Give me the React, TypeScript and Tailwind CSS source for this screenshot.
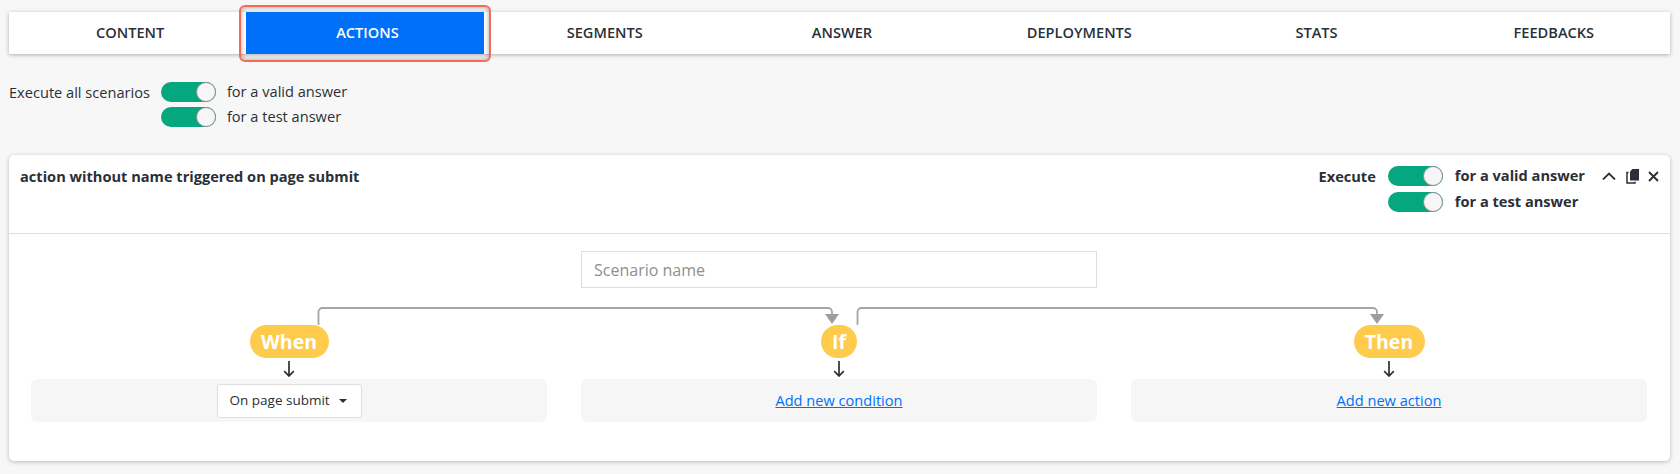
import type { ReactNode } from 'react';

const tabs = ['CONTENT', 'ACTIONS', 'SEGMENTS', 'ANSWER', 'DEPLOYMENTS', 'STATS', 'FEEDBACKS'];

function Toggle() {
  return (
    <div className="relative h-[20px] w-[55px] rounded-full bg-[#05a77f]">
      <div className="absolute right-0 top-0 h-[20px] w-[20px] rounded-full border border-[#8a8f94] bg-[#f6f6f6]" />
    </div>
  );
}

function ToggleRows({ bold }: { bold?: boolean }) {
  return (
    <div className={bold ? 'flex flex-col gap-[6px]' : 'flex flex-col gap-[5px]'}>
      {['for a valid answer', 'for a test answer'].map((label) => (
        <div key={label} className={bold ? 'flex h-[20px] items-center gap-[12px]' : 'flex h-[20px] items-center gap-[11px]'}>
          <Toggle />
          <span className={bold ? 'font-bold' : ''}>{label}</span>
        </div>
      ))}
    </div>
  );
}

function Step({ label, width, children }: { label: string; width: string; children: ReactNode }) {
  return (
    <div className="flex w-[516px] flex-col items-center">
      <div className={`flex h-[33px] items-center justify-center rounded-full bg-[#ffcb4d] text-[19.5px] font-bold text-white ${width}`}>
        {label}
      </div>
      <svg className="mt-[3px] h-[16px] w-[12px]" viewBox="0 0 12 16" fill="none" stroke="#2b2f38" strokeWidth="1.7">
        <path d="M6 0 V15 M1.2 10.2 L6 15 L10.8 10.2" />
      </svg>
      <div className="mt-[2px] flex h-[43px] w-full items-center justify-center rounded-[6px] bg-[#f6f6f6]">
        {children}
      </div>
    </div>
  );
}

export default function App() {
  return (
    <div className="min-h-[474px] bg-[#f7f7f7] pl-[9px] pr-[10px] pt-[12px] font-['Open_Sans',sans-serif] text-[14.6px] text-[#2b2f38]">
      {/* tabs */}
      <nav className="flex h-[42px] bg-white shadow-[0_1px_4px_rgba(0,0,0,0.3)]">
        {tabs.map((tab) => (
          <div
            key={tab}
            className={
              tab === 'ACTIONS'
                ? 'relative flex flex-1 items-center justify-center bg-[#0070f9] pl-[5px] font-semibold text-white'
                : 'flex flex-1 items-center justify-center pl-[5px] font-semibold'
            }
          >
            {tab}
            {tab === 'ACTIONS' && (
              <div className="absolute -bottom-[8px] -left-[7px] -right-[7px] -top-[7px] rounded-[6px] border-[2px] border-[#f66a58] shadow-[inset_0_0_5px_rgba(0,0,0,0.35)]" />
            )}
          </div>
        ))}
      </nav>

      <div className="mt-[28px] flex">
        <span className="mr-[11px] leading-[20px]">Execute all scenarios</span>
        <ToggleRows />
      </div>

      {/* scenario card */}
      <div className="mt-[28px] h-[306px] rounded-[5px] bg-white shadow-[0_1px_4px_rgba(0,0,0,0.25)]">
        <div className="flex h-[79px] justify-between border-b border-[#dedede] pl-[11px] pr-[11px] pt-[11px]">
          <span className="font-bold leading-[20px]">action without name triggered on page submit</span>
          <div className="flex">
            <span className="mr-[12px] font-bold leading-[20px]">Execute</span>
            <ToggleRows bold />
            <div className="ml-[17px] flex h-[20px] items-center">
              <svg className="h-[8px] w-[14px]" viewBox="0 0 14 8" fill="none" stroke="#2b2f38" strokeWidth="1.8">
                <path d="M1 7.5 L7 1.5 L13 7.5" />
              </svg>
              <svg className="ml-[10px] h-[15px] w-[13px]" viewBox="0 0 13 15" fill="#2b2f38">
                <path d="M6.5 0 H13 V11.5 H4 V2.5 z" />
                <path d="M2.5 3.5 H1 V14 H9 V12.8" fill="none" stroke="#2b2f38" strokeWidth="1.5" />
              </svg>
              <svg className="ml-[9px] h-[11px] w-[11px]" viewBox="0 0 11 11" fill="none" stroke="#2b2f38" strokeWidth="1.9">
                <path d="M1 1 L10 10 M10 1 L1 10" />
              </svg>
            </div>
          </div>
        </div>

        <div className="flex justify-center pr-[1px] pt-[17px]">
          <div className="flex h-[37px] w-[516px] items-center border border-[#dedede] px-[12px] text-[16px] text-[#8f8f8f]">
            Scenario name
          </div>
        </div>

        <div className="relative mt-[15px] flex w-full justify-between pl-[22px] pr-[23px] pt-[22px]">
          {/* connectors between the steps */}
          <svg className="absolute left-0 top-0 h-[24px] w-full" fill="none">
            <path d="M309.5 22 V9 a4 4 0 0 1 4 -4 H819 a4 4 0 0 1 4 4 V12" stroke="#a6a6a6" strokeWidth="1.8" />
            <path d="M816 11 h14 l-7 10 z" fill="#9e9e9e" />
            <path d="M848.5 22 V9 a4 4 0 0 1 4 -4 H1364 a4 4 0 0 1 4 4 V12" stroke="#a6a6a6" strokeWidth="1.8" />
            <path d="M1361 11 h14 l-7 10 z" fill="#9e9e9e" />
          </svg>
          <Step label="When" width="w-[79px]">
            <div className="flex h-[34px] w-[145px] items-center justify-between rounded-[3px] border border-[#dedede] bg-white pl-[12px] pr-[14px] text-[13.5px]">
              On page submit
              <span className="h-0 w-0 border-x-[4px] border-t-[4px] border-x-transparent border-t-[#2b2f38]" />
            </div>
          </Step>
          <Step label="If" width="w-[36px]">
            <a className="text-[#0070f9] underline">Add new condition</a>
          </Step>
          <Step label="Then" width="w-[71px]">
            <a className="text-[#0070f9] underline">Add new action</a>
          </Step>
        </div>
      </div>
    </div>
  );
}
